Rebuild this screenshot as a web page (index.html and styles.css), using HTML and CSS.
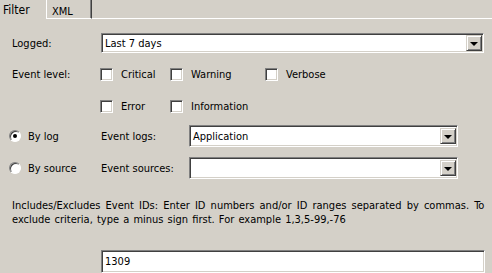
FILE: index.html
```html
<!DOCTYPE html>
<html lang="en">
<head>
    <meta charset="UTF-8">
    <title>Filter</title>
    <link rel="stylesheet" href="styles.css">
</head>
<body>
    <div class="tabs">
        <div class="tab active">Filter</div>
        <div class="tab">XML</div>
        <div class="tab-rest"></div>
    </div>

    <div class="panel">
        <div class="row logged-row">
            <span class="label">Logged:</span>
            <div class="combo">
                <span class="combo-text">Last 7 days</span>
                <span class="combo-btn"><span class="arrow"></span></span>
            </div>
        </div>

        <div class="row level-row">
            <span class="label">Event level:</span>
            <div class="checks">
                <label class="check"><span class="box"></span>Critical</label>
                <label class="check"><span class="box"></span>Warning</label>
                <label class="check"><span class="box"></span>Verbose</label>
                <label class="check"><span class="box"></span>Error</label>
                <label class="check"><span class="box"></span>Information</label>
            </div>
        </div>

        <div class="row source-row first">
            <label class="radio"><span class="dot checked"></span>By log</label>
            <span class="label">Event logs:</span>
            <div class="combo small">
                <span class="combo-text">Application</span>
                <span class="combo-btn"><span class="arrow"></span></span>
            </div>
        </div>
        <div class="row source-row">
            <label class="radio"><span class="dot"></span>By source</label>
            <span class="label">Event sources:</span>
            <div class="combo small">
                <span class="combo-text"></span>
                <span class="combo-btn"><span class="arrow"></span></span>
            </div>
        </div>

        <p class="hint"><span class="hint-wide">Includes/Excludes Event IDs: Enter ID numbers and/or ID ranges separated by commas. To</span><br>exclude criteria, type a minus sign first. For example 1,3,5-99,-76</p>

        <div class="row id-row">
            <div class="textbox">1309</div>
        </div>
    </div>
</body>
</html>
```

FILE: styles.css
```css
body {
    margin: 0;
    background-color: #d4d0c8;
    font-family: "DejaVu Sans Condensed", "Liberation Sans", sans-serif;
    font-size: 11px;
    color: #000;
    width: 492px;
    height: 273px;
    overflow: hidden;
}
/* tab strip */
.tabs {
    display: flex;
    height: 19px;
}
.tab {
    width: 46px;
    box-sizing: border-box;
    padding: 3px 0 0 4px;
}
.tab.active {
    padding-left: 3px;
    font-size: 12px;
}
.tab:not(.active) {
    border-left: 1px solid #fff;
    border-right: 1px solid #404040;
    box-shadow: inset -1px 0 0 #808080;
    border-bottom: 1px solid #fff;
    padding-left: 5px;
    padding-top: 5px;
}
.tab-rest {
    flex: 1;
    border-bottom: 1px solid #fff;
}
/* panel */
.panel {
    padding: 14px 8px 0 12px;
}
.row {
    display: flex;
    align-items: center;
}
.label {
    width: 89px;
    flex-shrink: 0;
}
.combo, .textbox {
    flex: 1;
    height: 20px;
    box-sizing: border-box;
    background: #fff;
    border-top: 1px solid #808080;
    border-left: 1px solid #808080;
    border-right: 1px solid #fff;
    border-bottom: 1px solid #fff;
    box-shadow: inset 1px 1px 0 #404040, inset -1px -1px 0 #d4d0c8;
    display: flex;
    align-items: center;
}
.combo-text {
    flex: 1;
    padding-left: 3px;
}
.combo-btn {
    width: 16px;
    height: 16px;
    margin: 0 1px 0 0;
    background: #d4d0c8;
    box-sizing: border-box;
    border-top: 1px solid #d4d0c8;
    border-left: 1px solid #d4d0c8;
    border-right: 1px solid #404040;
    border-bottom: 1px solid #404040;
    box-shadow: inset 1px 1px 0 #fff, inset -1px -1px 0 #808080;
    display: flex;
    align-items: center;
    justify-content: center;
}
.arrow {
    width: 0;
    height: 0;
    border-left: 4px solid transparent;
    border-right: 4px solid transparent;
    border-top: 4px solid #000;
    margin-top: 1px;
}
/* checkboxes */
.level-row {
    align-items: flex-start;
    margin-top: 15px;
}
.checks {
    display: grid;
    grid-template-columns: 70px 95px auto;
    row-gap: 19px;
    margin-left: -1px;
}
.check {
    display: flex;
    align-items: center;
    height: 13px;
}
.box {
    width: 13px;
    height: 13px;
    box-sizing: border-box;
    background: #fff;
    border-top: 1px solid #808080;
    border-left: 1px solid #808080;
    border-right: 1px solid #fff;
    border-bottom: 1px solid #fff;
    box-shadow: inset 1px 1px 0 #404040, inset -1px -1px 0 #d4d0c8;
    margin-right: 8px;
}
/* radio rows */
.source-row {
    margin-top: 10px;
    height: 22px;
}
.source-row.first {
    margin-top: 12px;
}
.radio {
    display: flex;
    align-items: center;
    width: 92px;
    margin-left: -3px;
}
.dot {
    width: 12px;
    height: 12px;
    box-sizing: border-box;
    border-radius: 50%;
    background: #fff;
    border: 1px solid;
    border-color: #808080 #fff #fff #808080;
    box-shadow: inset 1px 1px 0 #404040;
    margin-right: 7px;
    display: flex;
    align-items: center;
    justify-content: center;
}
.dot.checked::after {
    content: "";
    width: 4px;
    height: 4px;
    border-radius: 50%;
    background: #000;
}
.source-row .label {
    width: 88px;
}
.combo.small {
    flex: 0 0 269px;
    height: 22px;
}
.hint {
    margin: 20px 0 0;
    line-height: 14px;
    white-space: nowrap;
    word-spacing: 1px;
}
.hint-wide {
    word-spacing: 2px;
}
.id-row {
    margin-top: 23px;
    padding-left: 89px;
}
.textbox {
    height: 23px;
    padding-left: 3px;
    margin-right: -1px;
}
```
